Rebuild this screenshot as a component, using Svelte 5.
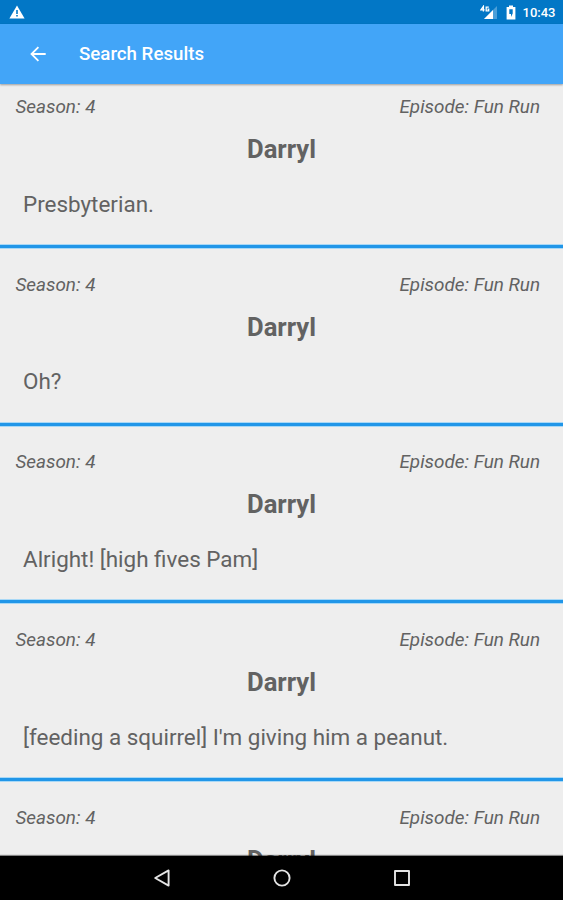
<script>
  const quotes = [
    'Presbyterian.',
    'Oh?',
    'Alright! [high fives Pam]',
    "[feeding a squirrel] I'm giving him a peanut.",
    ''
  ];
</script>

<div class="screen">
  <div class="status">
    <svg class="warn" width="16" height="14" viewBox="0 0 16 14">
      <path fill="#fff" d="M8 .4 15.6 13.4H.4z" />
      <path fill="#0277c6" d="M7.2 5h1.6v4H7.2zM7.2 10h1.6v1.6H7.2z" />
    </svg>
    <div class="right">
      <svg width="18" height="15" viewBox="0 0 18 15">
        <path fill="#4b9fd8" d="M17 1v13H4z" />
        <path fill="#fff" d="M13 5v9H4z" />
        <path fill="none" stroke="#fff" stroke-width="1.3" d="M3.4 6.5V1.4L1 4.8h3.6M8.8 2.2H6.2v3.6h2.5V4.1H7.4" />
      </svg>
      <svg class="battery" width="10" height="15" viewBox="0 0 10 15">
        <path fill="#fff" d="M3 .5h4V2h2.4v12.5H.6V2H3z" />
        <path fill="#0277c6" d="M3.3 4.3h3.4v4.2L5 12V9H3.3z" />
      </svg>
      <span>10:43</span>
    </div>
  </div>
  <header>
    <svg width="18" height="16" viewBox="0 0 18 16" fill="none" stroke="#fff" stroke-width="1.8">
      <path d="M16.7 8H2.5M9.4 1.1 2.5 8l6.9 6.9" />
    </svg>
    <h1>Search Results</h1>
  </header>
  <main>
    {#each quotes as quote}
      <article>
        <div class="meta"><span>Season: 4</span><span class="episode">Episode: Fun Run</span></div>
        <h2>Darryl</h2>
        <p>{quote}</p>
      </article>
    {/each}
  </main>
  <nav>
    <svg width="18" height="20" viewBox="0 0 18 20"><path d="M15.6 2.4v15.2L2.2 10z" /></svg>
    <svg width="20" height="20" viewBox="0 0 20 20"><circle cx="10" cy="10" r="7.6" /></svg>
    <svg width="18" height="20" viewBox="0 0 18 20"><rect x="2" y="3" width="14" height="14" /></svg>
  </nav>
</div>

<style>
  .screen {
    width: 563px;
    height: 900px;
    display: flex;
    flex-direction: column;
    overflow: hidden;
    background: #eee;
    color: #626262;
    font-family: Roboto, sans-serif;
  }
  .status {
    flex: none;
    height: 24px;
    display: flex;
    justify-content: space-between;
    background: #0277c6;
    color: #fff;
    z-index: 1;
  }
  .warn { margin: 5px 0 0 9px; }
  .right {
    display: flex;
    align-items: center;
    padding: 1px 7.5px 0 0;
    font-size: 13px;
    font-weight: 500;
    line-height: 23px;
  }
  .battery { margin: 0 7px 0 8px; }
  header {
    flex: none;
    height: 59.5px;
    display: flex;
    align-items: center;
    background: #42a5f8;
    color: #fff;
    box-shadow: 0 1px 2px rgba(0, 0, 0, 0.35);
    z-index: 1;
  }
  header svg { margin-left: 29px; }
  h1 {
    margin: 0 0 0 32px;
    font-size: 18.7px;
    font-weight: 500;
  }
  main {
    flex: 1;
    min-height: 0;
    margin-top: -13.2px;
    overflow: hidden;
  }
  article {
    box-sizing: border-box;
    height: 177.7px;
    padding-top: 24.6px;
    border-bottom: 3px solid #2196e8;
    box-shadow: 0 1px 0 #a8d8f6, inset 0 -1px 0 #a8d8f6;
  }
  .meta {
    display: flex;
    justify-content: space-between;
    padding: 0 23px 0 15.4px;
    font-size: 18.9px;
    line-height: 24px;
    font-style: italic;
  }
  h2 {
    margin: 14px 0 0;
    text-align: center;
    font-size: 25.6px;
    line-height: 32px;
    font-weight: 700;
  }
  p {
    margin: 23.6px 0 0 23px;
    font-size: 22.45px;
    line-height: 30px;
  }
  nav {
    flex: none;
    height: 44px;
    display: flex;
    align-items: center;
    justify-content: center;
    gap: 101px;
    background: #000;
    box-shadow: 0 -1px 1px rgba(0, 0, 0, 0.45);
    z-index: 1;
  }
  nav svg {
    fill: none;
    stroke: #e4e4e4;
    stroke-width: 1.9;
    stroke-linejoin: round;
  }
</style>
